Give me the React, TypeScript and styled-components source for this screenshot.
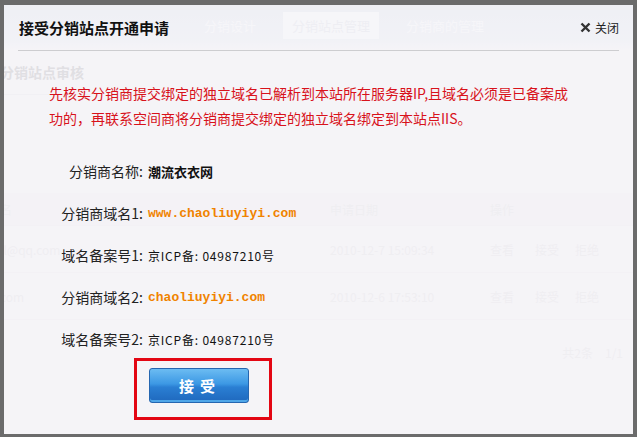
import React from 'react';
import styled, { createGlobalStyle } from 'styled-components';

const GlobalStyle = createGlobalStyle`
  html, body {
    margin: 0;
    padding: 0;
    background: #f5f4f7;
  }
  body {
    font-family: "Noto Sans CJK SC", "Liberation Sans", sans-serif;
  }
`;

// the admin page that shows faintly behind the dialog
const Page = styled.div`
  position: relative;
  width: 637px;
  height: 437px;
  overflow: hidden;
  background: #f5f4f7;
  color: #e8e8eb;
  font-size: 12px;
`;

const NavBar = styled.div`
  height: 50px;
  display: flex;
  align-items: center;
  gap: 18px;
  padding-left: 195px;
  background: linear-gradient(#e7ebf2, #edf0f5 80%, #f5f4f7);
`;

const NavTab = styled.div<{ $active?: boolean }>`
  padding: 4px 9px;
  color: ${p => (p.$active ? '#e6e9ef' : '#f7f8fb')};
  background: ${p => (p.$active ? '#f7f8fa' : 'transparent')};
  font-size: 13px;
`;

const PageTitle = styled.div`
  height: 44px;
  line-height: 44px;
  font-size: 14px;
  font-weight: bold;
  color: #cbcbce;
  width: 92px;
  border-bottom: 1px solid #ededf0;
`;

const Table = styled.div`
  margin-top: 98px;
`;

const TableRow = styled.div<{ $head?: boolean }>`
  display: grid;
  grid-template-columns: 330px 160px 45px 40px 40px;
  align-items: center;
  height: ${p => (p.$head ? 32 : 46)}px;
  background: ${p => (p.$head ? '#f2f1f4' : 'transparent')};
  border-bottom: 1px solid #f0eff2;
`;

const Pager = styled.div`
  display: flex;
  justify-content: flex-end;
  gap: 12px;
  padding: 24px 14px 0 0;
`;

// the dialog itself
const Dialog = styled.div`
  position: absolute;
  inset: 0;
  box-sizing: border-box;
  border-style: solid;
  border-color: #6b6b6b;
  border-width: 5px 4px 3px 4px;
  background: rgba(245, 244, 247, 0.5);
  display: flex;
  flex-direction: column;
  color: #222;
`;

const Header = styled.div`
  height: 45px;
  display: flex;
  align-items: center;
  justify-content: space-between;
  padding: 0 14px 0 15px;
`;

const Title = styled.h1`
  margin: 0;
  font-size: 15px;
  font-weight: bold;
  color: #111;
`;

const CloseBtn = styled.a`
  display: flex;
  align-items: center;
  gap: 4px;
  font-size: 12px;
  color: #222;
  cursor: pointer;
`;

const Divider = styled.div`
  height: 1px;
  margin: 0 14px;
  background: #cdcdd0;
`;

const Notice = styled.p`
  margin: 30px 0 0 45px;
  font-size: 14px;
  line-height: 25px;
  color: #d8121b;
`;

const InfoGrid = styled.div`
  margin-top: 19px;
  display: grid;
  grid-template-columns: 139px 1fr;
  grid-auto-rows: 42px;
  column-gap: 5px;
  align-items: center;
`;

const Label = styled.div`
  text-align: right;
  font-size: 14px;
  color: #222;
`;

const Value = styled.div<{ $kind?: 'name' | 'domain' | 'icp' }>`
  font-size: ${p => (p.$kind === 'icp' ? 12 : 13)}px;
  font-weight: ${p => (p.$kind === 'icp' ? 'normal' : 'bold')};
  letter-spacing: ${p => (p.$kind === 'icp' ? '0.8px' : 'normal')};
  font-family: ${p => (p.$kind === 'domain' ? '"Liberation Mono", monospace' : 'inherit')};
  color: ${p => (p.$kind === 'domain' ? '#f08300' : '#111')};
`;

const Highlight = styled.div`
  align-self: flex-start;
  margin: -2px 0 0 130px;
  padding: 7px 20px 14px 12px;
  border: 3px solid #e30613;
`;

const AcceptBtn = styled.button`
  width: 100px;
  height: 35px;
  border: 1px solid #2566b0;
  border-radius: 3px;
  background: linear-gradient(#6cbcf2, #3c98e4 45%, #2a7fd3 55%, #1f68bd);
  box-shadow: inset 0 -2px 0 #4fa6e8;
  color: #fff;
  font-family: "Noto Sans CJK SC", sans-serif;
  font-size: 15px;
  font-weight: bold;
  letter-spacing: 6px;
  padding-left: 8px;
  cursor: pointer;
`;

const rows = [
  { label: '分销商名称:', value: '潮流衣衣网', kind: 'name' as const },
  { label: '分销商域名1:', value: 'www.chaoliuyiyi.com', kind: 'domain' as const },
  { label: '域名备案号1:', value: '京ICP备: 04987210号', kind: 'icp' as const },
  { label: '分销商域名2:', value: 'chaoliuyiyi.com', kind: 'domain' as const },
  { label: '域名备案号2:', value: '京ICP备: 04987210号', kind: 'icp' as const },
];

export default function App() {
  return (
    <>
      <GlobalStyle />
      <Page>
        <NavBar>
          <NavTab>分销设计</NavTab>
          <NavTab $active>分销站点管理</NavTab>
          <NavTab>分销商的管理</NavTab>
        </NavBar>
        <PageTitle>分销站点审核</PageTitle>
        <Table>
          <TableRow $head>
            <span>名</span>
            <span>申请日期</span>
            <span>操作</span>
          </TableRow>
          <TableRow>
            <span>ll@qq.com</span>
            <span>2010-12-7 15:09:34</span>
            <span>查看</span>
            <span>接受</span>
            <span>拒绝</span>
          </TableRow>
          <TableRow>
            <span>com</span>
            <span>2010-12-6 17:53:10</span>
            <span>查看</span>
            <span>接受</span>
            <span>拒绝</span>
          </TableRow>
        </Table>
        <Pager>
          <span>共2条</span>
          <span>1/1</span>
        </Pager>

        <Dialog>
          <Header>
            <Title>接受分销站点开通申请</Title>
            <CloseBtn>
              <svg width="11" height="11" viewBox="0 0 11 11">
                <path d="M1.5 1.5 L9.5 9.5 M9.5 1.5 L1.5 9.5" stroke="#333" strokeWidth="2.4" />
              </svg>
              关闭
            </CloseBtn>
          </Header>
          <Divider />
          <Notice>
            先核实分销商提交绑定的独立域名已解析到本站所在服务器IP,且域名必须是已备案成
            <br />
            功的，再联系空间商将分销商提交绑定的独立域名绑定到本站点IIS。
          </Notice>
          <InfoGrid>
            {rows.map(r => (
              <React.Fragment key={r.label}>
                <Label>{r.label}</Label>
                <Value $kind={r.kind}>{r.value}</Value>
              </React.Fragment>
            ))}
          </InfoGrid>
          <Highlight>
            <AcceptBtn>接受</AcceptBtn>
          </Highlight>
        </Dialog>
      </Page>
    </>
  );
}
